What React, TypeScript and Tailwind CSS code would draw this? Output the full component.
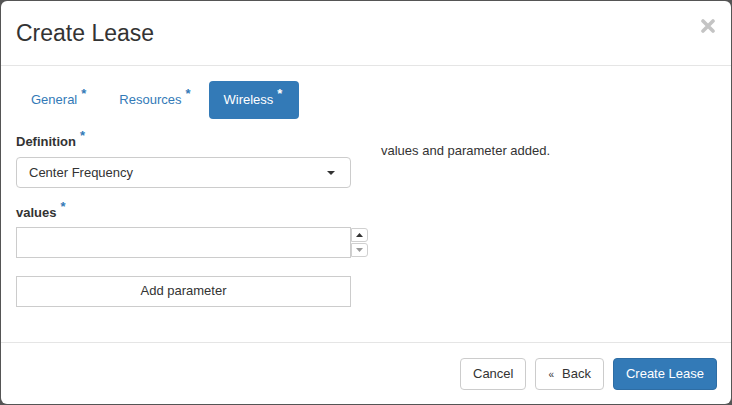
import { useState } from "react";

const tabs = ["General", "Resources", "Wireless"];

const Star = ({ white }: { white?: boolean }) => (
  <span
    className={`relative -top-[6px] ml-[4px] text-[13px] font-bold ${
      white ? "text-white" : "text-[#337ab7]"
    }`}
  >
    *
  </span>
);

const App = () => {
  const [active, setActive] = useState("Wireless");
  const [value, setValue] = useState("");

  return (
    <div
      className="h-[405px] w-[732px] overflow-hidden bg-[#555555] pl-px pt-px text-[#333333]"
      style={{ fontFamily: '"Liberation Sans", Arial, sans-serif' }}
    >
      <div className="flex h-[403px] w-[730px] flex-col rounded-[6px] bg-white">
        {/* header */}
        <div className="flex h-[65px] shrink-0 items-center justify-between border-b border-[#e5e5e5] pl-[15px] pr-[16px]">
          <h4 className="text-[23px] leading-none text-[#333333]">Create Lease</h4>
          <button className="-mt-[14px]">
            <svg width="14" height="14" viewBox="0 0 14 14">
              <path
                d="M2 2L12 12M12 2L2 12"
                stroke="#c4c4c4"
                strokeWidth="3.6"
                strokeLinecap="round"
              />
            </svg>
          </button>
        </div>

        {/* body */}
        <div className="flex-1 px-[15px] pt-[15px]">
          <ul className="flex h-[38px] gap-[3px] text-[13px]">
            {tabs.map((t) => (
              <li key={t}>
                <button
                  onClick={() => setActive(t)}
                  className={`flex h-[38px] items-center rounded-[4px] px-[15px] ${
                    active === t ? "bg-[#337ab7] pr-[17px] text-white" : "text-[#337ab7]"
                  }`}
                >
                  {t}
                  <Star white={active === t} />
                </button>
              </li>
            ))}
          </ul>

          <div className="mt-[14px] flex">
            <div className="w-[335px]">
              <label className="block text-[13px] font-bold leading-[18px]">
                Definition
                <Star />
              </label>
              <div className="mt-[6px] flex h-[31px] items-center justify-between rounded-[4px] border border-[#cccccc] pl-[12px] pr-[15px] text-[13px]">
                <span>Center Frequency</span>
                <svg width="8" height="4" viewBox="0 0 8 4">
                  <path d="M0 0h8L4 4z" fill="#333333" />
                </svg>
              </div>

              <label className="mt-[16px] block text-[13px] font-bold leading-[18px]">
                values
                <Star />
              </label>
              <div className="relative mt-[5px]">
                <input
                  value={value}
                  onChange={(e) => setValue(e.target.value)}
                  className="block h-[31px] w-[335px] border border-[#cccccc] px-[12px] text-[13px] focus:outline-none"
                />
                <div className="absolute left-[335px] top-[1px] flex flex-col gap-[1px]">
                  <div className="flex h-[14px] w-[17px] items-center justify-center rounded-r-[3px] border border-[#d0d0d0] bg-white">
                    <svg width="7" height="4" viewBox="0 0 7 4">
                      <path d="M0 4h7L3.5 0z" fill="#333333" />
                    </svg>
                  </div>
                  <div className="flex h-[14px] w-[17px] items-center justify-center rounded-r-[3px] border border-[#d0d0d0] bg-white">
                    <svg width="7" height="4" viewBox="0 0 7 4">
                      <path d="M0 0h7L3.5 4z" fill="#999999" />
                    </svg>
                  </div>
                </div>
              </div>

              <button className="mt-[18px] block h-[31px] w-[335px] border border-[#cccccc] bg-white pb-px text-center text-[13px]">
                Add parameter
              </button>
            </div>

            <div className="ml-[30px] mt-[9px] text-[13px] leading-[18px]">
              values and parameter added.
            </div>
          </div>
        </div>

        {/* footer */}
        <div className="flex h-[62px] shrink-0 items-start justify-end gap-[9px] border-t border-[#e5e5e5] pr-[14px] pt-[15px] text-[13px]">
          <button className="h-[32px] rounded-[4px] border border-[#cccccc] bg-white px-[12px]">
            Cancel
          </button>
          <button className="h-[32px] rounded-[4px] border border-[#cccccc] bg-white px-[12px]">
            <span className="mr-[8px] text-[10px]">«</span>Back
          </button>
          <button className="h-[32px] rounded-[4px] border border-[#2e6da4] bg-[#337ab7] px-[12px] text-white">
            Create Lease
          </button>
        </div>
      </div>
    </div>
  );
};

export default App;
